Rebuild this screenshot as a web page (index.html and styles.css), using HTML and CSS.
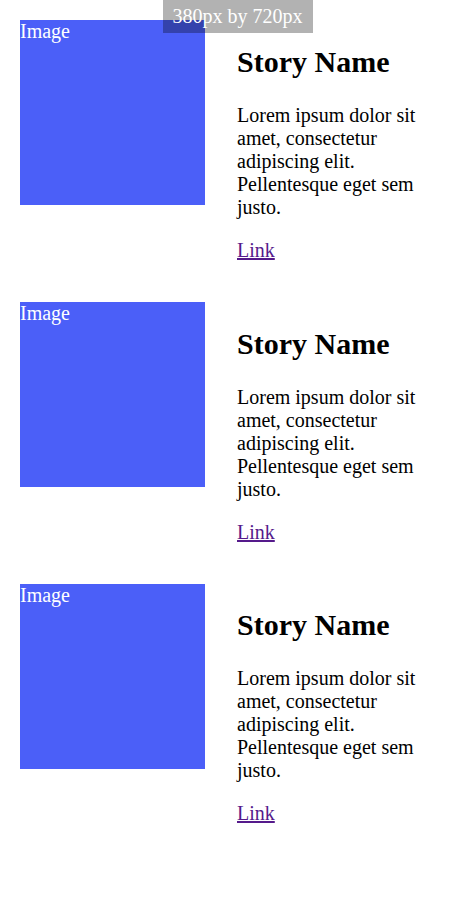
FILE: index.html
```html
<!DOCTYPE html>
<html>
<head>
<meta charset="utf-8">
<link rel="stylesheet" href="styles.css">
</head>
<body>
<div class="badge">380px by 720px</div>
<main class="stories">
  <article class="story">
    <div class="image">Image</div>
    <div class="content">
      <h2>Story Name</h2>
      <p>Lorem ipsum dolor sit amet, consectetur adipiscing elit. Pellentesque eget sem justo.</p>
      <p><a href="#">Link</a></p>
    </div>
  </article>
  <article class="story">
    <div class="image">Image</div>
    <div class="content">
      <h2>Story Name</h2>
      <p>Lorem ipsum dolor sit amet, consectetur adipiscing elit. Pellentesque eget sem justo.</p>
      <p><a href="#">Link</a></p>
    </div>
  </article>
  <article class="story">
    <div class="image">Image</div>
    <div class="content">
      <h2>Story Name</h2>
      <p>Lorem ipsum dolor sit amet, consectetur adipiscing elit. Pellentesque eget sem justo.</p>
      <p><a href="#">Link</a></p>
    </div>
  </article>
</main>
</body>
</html>
```
FILE: styles.css
```css
html, body {
  margin: 0;
  padding: 0;
  background: #fff;
}
body {
  font-family: "Liberation Serif", "Times New Roman", serif;
  font-size: 20px;
  color: #000;
}
.badge {
  position: absolute;
  top: 0;
  left: 50%;
  transform: translateX(-50%);
  background: rgba(0, 0, 0, 0.3);
  color: #fff;
  padding: 5px 10px;
  white-space: nowrap;
  z-index: 2;
}
.stories {
  padding: 20px;
  display: flex;
  flex-direction: column;
  gap: 20px;
}
.story {
  display: flex;
  gap: 32px;
  align-items: flex-start;
}
.image {
  width: 185px;
  height: 185px;
  flex: none;
  background: #4b5ff8;
  color: #fff;
}
.content {
  width: 200px;
}
.content h2 {
  font-size: 30px;
  margin: 0.83em 0;
}
.content p {
  margin: 20px 0;
}
.content h2 + p {
  margin-top: 0;
}
.content a {
  color: #551a8b;
}
```
